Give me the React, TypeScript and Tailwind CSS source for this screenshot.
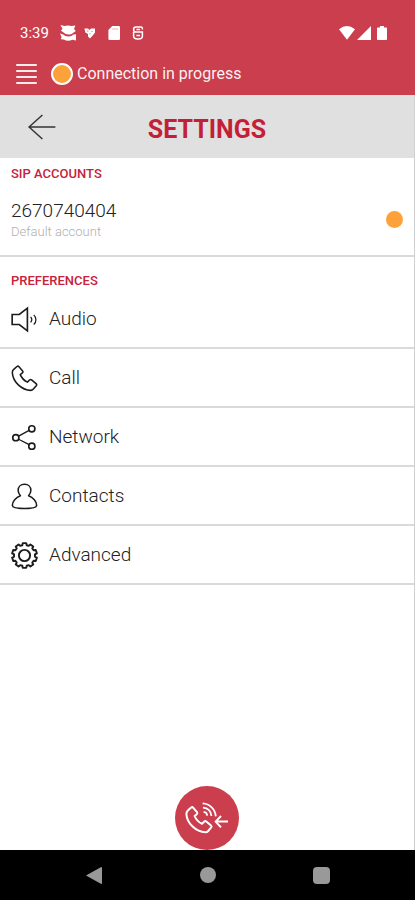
import React from 'react';

type IconProps = { className?: string };

const AudioIcon = ({ className }: IconProps) => (
  <svg viewBox="0 0 28 28" fill="none" stroke="#1c1c1c" className={className}>
    <path d="M1.2 8.8H8.6L17 2.2V25.8L8.6 19.2H1.2Z" strokeWidth="1.7" />
    <path
      d="M20.3 11.2C21.7 12.8 21.7 15.4 20.3 17M23.6 9.2C26.6 12 26.6 16.4 23.6 19.2"
      strokeWidth="1.3"
    />
  </svg>
);

const HANDSET =
  'M2.8 4.6L6.2 1.6C6.9 1 7.7 1.1 8.3 1.8L12 6.2C12.5 6.9 12.5 7.6 11.8 8.2L9.6 10C10.8 13 13.8 16.2 17 17.8L19.2 15.6C19.9 15 20.6 14.9 21.3 15.5L26 19.4C26.7 20 26.8 20.7 26.2 21.4L23.2 25C22.5 25.8 21.6 26.3 20.4 26.3C11 26 2 17.4 1.4 8.2C1.3 6.6 1.8 5.4 2.8 4.6Z';

const CallIcon = ({ className }: IconProps) => (
  <svg viewBox="0 0 28 28" fill="none" stroke="#1c1c1c" className={className}>
    <path d={HANDSET} strokeWidth="1.6" strokeLinejoin="round" />
  </svg>
);

const NetworkIcon = ({ className }: IconProps) => (
  <svg viewBox="0 0 28 28" fill="none" stroke="#1c1c1c" className={className}>
    <g strokeWidth="1.7">
      <circle cx="5" cy="14.2" r="3.2" />
      <circle cx="21.6" cy="5" r="3.2" />
      <circle cx="21.6" cy="23" r="3.2" />
    </g>
    <path d="M7.9 12.6L18.8 6.6M7.9 15.8L18.8 21.4" strokeWidth="1.4" />
  </svg>
);

const ContactsIcon = ({ className }: IconProps) => (
  <svg viewBox="0 0 28 28" fill="none" stroke="#1c1c1c" className={className}>
    <path
      d="M14 1.4C18 1.4 20.6 4 20.6 7.6C20.6 10 19.6 11.8 18.2 13.2C22.8 14.8 26.8 19 26.6 23.4C26.5 25.4 21 26.5 14 26.5S1.5 25.4 1.4 23.4C1.2 19 5.2 14.8 9.8 13.2C8.4 11.8 7.4 10 7.4 7.6C7.4 4 10 1.4 14 1.4Z"
      strokeWidth="1.6"
      strokeLinejoin="round"
    />
  </svg>
);

// ten teeth, each one goes valley - tip - tip - valley
const gearPoints = Array.from({ length: 10 }, (_, i) =>
  [
    [-12, 10.9],
    [-8, 13],
    [8, 13],
    [12, 10.9],
  ].map(([offset, radius]) => {
    const angle = ((i * 36 + offset) * Math.PI) / 180;
    return `${(radius * Math.sin(angle)).toFixed(2)},${(-radius * Math.cos(angle)).toFixed(2)}`;
  }),
)
  .flat()
  .join(' ');

const AdvancedIcon = ({ className }: IconProps) => (
  <svg viewBox="-14 -14 28 28" fill="none" stroke="#1c1c1c" className={className}>
    <circle r="5.8" strokeWidth="2" />
    <polygon points={gearPoints} strokeWidth="2" strokeLinejoin="round" />
  </svg>
);

const preferences = [
  { name: 'Audio', Icon: AudioIcon },
  { name: 'Call', Icon: CallIcon },
  { name: 'Network', Icon: NetworkIcon },
  { name: 'Contacts', Icon: ContactsIcon },
  { name: 'Advanced', Icon: AdvancedIcon },
];

const StatusBar = () => (
  <div className="flex h-8 items-center justify-between pr-7 pl-5">
    <div className="flex items-center">
      <span className="w-10 text-[15px]">3:39</span>
      <svg viewBox="0 0 16 16" fill="currentColor" className="h-4 w-4">
        <path d="M.4 0L4.4 1Q8 -.2 11.6 1L15.4 .6L14 4L15.8 6L13 8Q11.6 9.6 8.6 9.6Q5.4 9.6 3.6 7.6L.8 5.4L2.6 4Z" />
        <path d="M0 8.4L3.2 9.6Q5 11.6 8.4 11.6Q11.8 11.6 13.4 9.6L16 9.2V15.4L12.4 14.8Q7.8 17 3.8 14.6L.8 14.2L1.6 12.2Z" />
      </svg>
      <svg viewBox="0 0 12 12" fill="currentColor" className="ml-2 h-3 w-3">
        <path d="M.4 1.6H4L5.6 3L7 1.4H11V5.4L9.6 7.6L6 11.4L4 9.4V7L1.4 5.4Z" />
        <path d="M3 4H4.4M7.4 4.4H8.6M6 6.4V7.4" stroke="#cb3e4d" strokeWidth=".7" />
      </svg>
      <svg viewBox="0 0 12 14" fill="currentColor" className="ml-3 h-4 w-3">
        <path d="M4.2 0H10.8Q12 0 12 1.2V12.8Q12 14 10.8 14H1.6Q.4 14 .4 12.8V4Z" />
        <path d="M5 2V4M7 2V4M9 2V4" stroke="#cb3e4d" strokeWidth=".4" />
      </svg>
      <svg
        viewBox="0 0 12 14"
        fill="none"
        stroke="currentColor"
        strokeWidth="1.5"
        className="ml-3 h-4 w-3"
      >
        <path d="M10.4 3.4V2.6Q10.4 1 9 1H4Q1.6 1 1.6 3.4Q1.6 6 4 6H10.4V10Q10.4 13 6.6 13H5.4Q1.6 13 1.6 10V6M4.4 3.6H8M4.4 9.4H8" />
      </svg>
    </div>
    <div className="flex items-center">
      <svg viewBox="0 0 16 14" fill="currentColor" className="h-4 w-4">
        <path d="M0 3.2Q8 -3 16 3.2L8 13.8Z" />
      </svg>
      <svg viewBox="0 0 14 14" fill="currentColor" className="ml-0.5 h-4 w-3.5">
        <path d="M14 0V14H0Z" />
      </svg>
      <svg viewBox="0 0 10 14" fill="currentColor" className="ml-1.5 h-4 w-2.5">
        <path d="M3 0H7V1.4H9.4Q10 1.4 10 2V13.2Q10 14 9.2 14H.8Q0 14 0 13.2V2Q0 1.4 .6 1.4H3Z" />
      </svg>
    </div>
  </div>
);

const App = () => {
  return (
    <div className="flex min-h-screen flex-col bg-white font-['Roboto',sans-serif]">
      <header className="bg-[#cb3e4d] pt-[17px] text-white">
        <StatusBar />
        <div className="flex h-[46px] items-center pt-1 pl-4">
          <button aria-label="Menu" className="flex w-[21px] flex-col gap-1">
            <span className="h-0.5 w-full rounded-full bg-white/90" />
            <span className="h-0.5 w-full rounded-full bg-white/90" />
            <span className="h-0.5 w-full rounded-full bg-white/90" />
            <span className="h-0.5 w-full rounded-full bg-white/90" />
          </button>
          <span className="ml-3.5 h-[22px] w-[22px] rounded-full border-2 border-white bg-[#fda23a]" />
          <span className="ml-1 text-base text-white/95">
            Connection in progress
          </span>
        </div>
      </header>

      <main className="flex grow flex-col border-r border-[#d0d0d0]">
        <div className="grid h-[63px] grid-cols-[1fr_auto_1fr] items-center bg-[#e0e0e0]">
          <button aria-label="Back" className="ml-7 w-7">
            <svg
              viewBox="0 0 28 26"
              fill="none"
              stroke="#333333"
              strokeWidth="1.5"
              className="h-[26px] w-7"
            >
              <path d="M27.4 13H1M14.4 1L1 13L14.4 25" />
            </svg>
          </button>
          <h1 className="pt-1.5 text-[25px] font-bold text-[#c51f38]">SETTINGS</h1>
        </div>

        <section className="border-b-2 border-[#dadada] px-[11px] pt-2 pb-[15px]">
          <h2 className="text-[13px] leading-4 font-medium text-[#c8213a]">
            SIP ACCOUNTS
          </h2>
          <button className="mt-4 flex w-full items-center justify-between text-left">
            <span>
              <span className="block text-[19px] leading-[26px] font-light text-[#222222]">
                2670740404
              </span>
              <span className="block text-[13px] leading-4 font-light text-[#b0b0b0]">
                Default account
              </span>
            </span>
            <span className="h-[17px] w-[17px] rounded-full bg-[#fda23a]" />
          </button>
        </section>

        <section className="pt-4">
          <h2 className="px-[11px] pb-px text-[13px] leading-4 font-medium text-[#c8213a]">
            PREFERENCES
          </h2>
          <ul>
            {preferences.map(({ name, Icon }) => (
              <li key={name} className="border-b-2 border-[#dadada]">
                <button className="flex h-[57px] w-full items-center gap-[11px] px-[11px] pt-0.5 text-left text-[19px] font-light text-[#222222]">
                  <Icon className="h-[27px] w-[27px]" />
                  {name}
                </button>
              </li>
            ))}
          </ul>
        </section>

        <button
          aria-label="Call back"
          className="mx-auto mt-auto flex h-16 w-16 items-center justify-center rounded-full bg-[#cb3e4d]"
        >
          <svg
            viewBox="0 0 44 34"
            fill="none"
            stroke="white"
            strokeLinejoin="round"
            className="h-[34px] w-11"
          >
            <path d={HANDSET} strokeWidth="2" transform="translate(0 5)" />
            <path
              d="M18.6 10.8C20.6 11 22 12.4 22.2 14.6M18 6.6C22.6 7 26 10 26.4 15M17.6 2.4C24.8 2.8 30.2 8 30.8 15.4"
              strokeWidth="1.8"
            />
            <path d="M43 20.6H30.6M36 15L30.6 20.6L36 26.4" strokeWidth="2" />
          </svg>
        </button>
      </main>

      <nav className="flex h-[50px] items-center bg-black px-[37px] text-[#999999]">
        <button aria-label="Back" className="flex flex-1 justify-center">
          <svg viewBox="0 0 16 17" fill="currentColor" className="h-[17px] w-4">
            <path d="M0 8.5L14.8 .2Q16 -.2 16 1V16Q16 17.2 14.8 16.8Z" />
          </svg>
        </button>
        <button aria-label="Home" className="flex flex-1 justify-center">
          <span className="h-4 w-4 rounded-full bg-[#999999]" />
        </button>
        <button aria-label="Recent apps" className="flex flex-1 justify-center">
          <span className="h-[17px] w-[17px] rounded-sm bg-[#999999]" />
        </button>
      </nav>
    </div>
  );
};

export default App;
